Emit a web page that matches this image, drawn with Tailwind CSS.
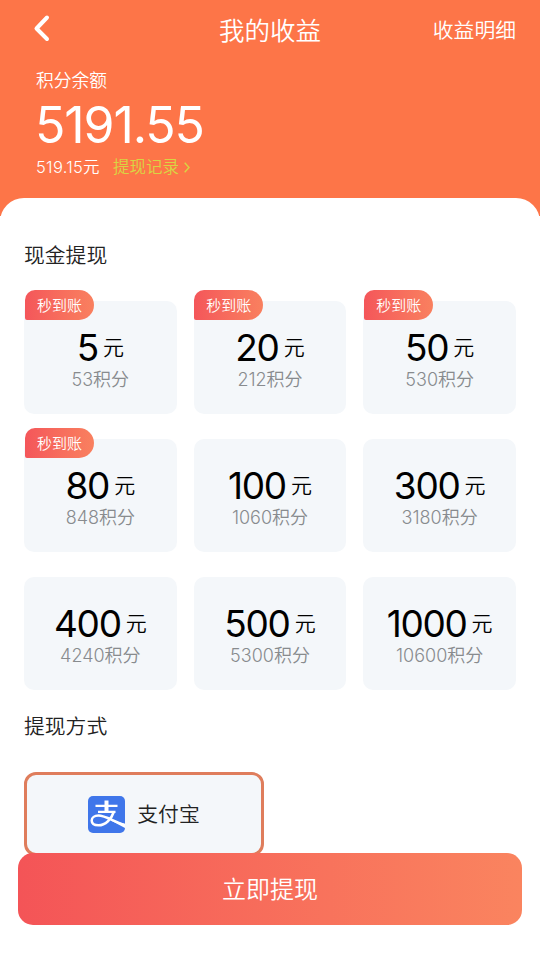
<!DOCTYPE html>
<html lang="zh-CN">
<head>
<meta charset="utf-8">
<title>我的收益</title>
<script src="https://cdn.jsdelivr.net/npm/@tailwindcss/browser@4"></script>
</head>
<body class="bg-white">
<div class="relative w-[540px] h-[956px] overflow-hidden bg-white font-['Inter','Noto_Sans_CJK_SC',sans-serif] font-[350] text-[#222]">
  <header class="h-[216px] bg-[#fd7548] text-white">
    <nav class="grid grid-cols-3 items-center h-[60px] pl-[33px] pr-6">
      <svg class="w-[18px] h-[28px] -mt-1" viewBox="0 0 18 28" fill="none" stroke="#fff" stroke-width="4" stroke-linecap="round" stroke-linejoin="round"><path d="M14 3.5 3.5 14.5 14 25"/></svg>
      <h1 class="pt-px text-[25.5px] leading-[36px] text-center whitespace-nowrap -ml-[9px]">我的收益</h1>
      <a class="pt-0.5 text-[20.8px] leading-[30px] text-right whitespace-nowrap">收益明细</a>
    </nav>
    <div class="pl-9">
      <div class="mt-[9px] text-[17.8px] leading-6">积分余额</div>
      <div class="mt-1 -ml-px text-[50px] leading-[56px] tracking-[-1.1px] font-normal">5191.55</div>
      <div class="mt-[2px] flex items-center text-[16.5px] leading-6">
        <span class="text-[16.5px] tracking-[0.3px]">519.15元</span>
        <a class="ml-[13px] flex items-center text-[#d9d443]">提现记录<svg class="ml-[5px] w-[6px] h-[11px]" viewBox="0 0 6 11" fill="none" stroke="currentColor" stroke-width="1.4"><path d="M.7 .8 5 5.5 .7 10.2"/></svg></a>
      </div>
    </div>
  </header>
  <main class="relative -mt-[18px] rounded-t-[24px] bg-white px-6 pt-[43px]">
    <h2 class="text-[20.8px] leading-[30px]">现金提现</h2>
    <div class="mt-[30px] grid grid-cols-3 gap-x-[17px] gap-y-[25px] text-center">
      <div class="relative h-[113px] rounded-[10px] bg-[#f4f7fa] pt-[27px]">
        <span class="absolute -top-[11px] left-px w-[69px] h-[30px] rounded-tl-[10px] rounded-r-[15px] rounded-bl-[2px] bg-linear-to-r from-[#f4565a] to-[#f9805f] text-white text-[15px] leading-[31px]">秒到账</span>
        <div class="flex items-center justify-center gap-[5px] h-10 text-black"><span class="text-[37px] leading-10 tracking-[-1.3px] font-normal">5</span><span class="text-[21px] leading-10">元</span></div>
        <div class="text-[18px] leading-[23px] text-[#888b8e]">53积分</div>
      </div>
      <div class="relative h-[113px] rounded-[10px] bg-[#f4f7fa] pt-[27px]">
        <span class="absolute -top-[11px] left-[0.5px] w-[69px] h-[30px] rounded-tl-[10px] rounded-r-[15px] rounded-bl-[2px] bg-linear-to-r from-[#f4565a] to-[#f9805f] text-white text-[15px] leading-[31px]">秒到账</span>
        <div class="flex items-center justify-center gap-[5px] h-10 text-black"><span class="text-[37px] leading-10 tracking-[-1.3px] font-normal">20</span><span class="text-[21px] leading-10">元</span></div>
        <div class="text-[18px] leading-[23px] text-[#888b8e]">212积分</div>
      </div>
      <div class="relative h-[113px] rounded-[10px] bg-[#f4f7fa] pt-[27px]">
        <span class="absolute -top-[11px] left-px w-[69px] h-[30px] rounded-tl-[10px] rounded-r-[15px] rounded-bl-[2px] bg-linear-to-r from-[#f4565a] to-[#f9805f] text-white text-[15px] leading-[31px]">秒到账</span>
        <div class="flex items-center justify-center gap-[5px] h-10 text-black"><span class="text-[37px] leading-10 tracking-[-1.3px] font-normal">50</span><span class="text-[21px] leading-10">元</span></div>
        <div class="text-[18px] leading-[23px] text-[#888b8e]">530积分</div>
      </div>
      <div class="relative h-[113px] rounded-[10px] bg-[#f4f7fa] pt-[27px]">
        <span class="absolute -top-[11px] left-px w-[69px] h-[30px] rounded-tl-[10px] rounded-r-[15px] rounded-bl-[2px] bg-linear-to-r from-[#f4565a] to-[#f9805f] text-white text-[15px] leading-[31px]">秒到账</span>
        <div class="flex items-center justify-center gap-[5px] h-10 text-black"><span class="text-[37px] leading-10 tracking-[-1.3px] font-normal">80</span><span class="text-[21px] leading-10">元</span></div>
        <div class="text-[18px] leading-[23px] text-[#888b8e]">848积分</div>
      </div>
      <div class="h-[113px] rounded-[10px] bg-[#f4f7fa] pt-[27px]">
        <div class="flex items-center justify-center gap-[5px] h-10 text-black"><span class="text-[37px] leading-10 tracking-[-1.3px] font-normal">100</span><span class="text-[21px] leading-10">元</span></div>
        <div class="text-[18px] leading-[23px] text-[#888b8e]">1060积分</div>
      </div>
      <div class="h-[113px] rounded-[10px] bg-[#f4f7fa] pt-[27px]">
        <div class="flex items-center justify-center gap-[5px] h-10 text-black"><span class="text-[37px] leading-10 tracking-[-1.3px] font-normal">300</span><span class="text-[21px] leading-10">元</span></div>
        <div class="text-[18px] leading-[23px] text-[#888b8e]">3180积分</div>
      </div>
      <div class="h-[113px] rounded-[10px] bg-[#f4f7fa] pt-[27px]">
        <div class="flex items-center justify-center gap-[5px] h-10 text-black"><span class="text-[37px] leading-10 tracking-[-1.3px] font-normal">400</span><span class="text-[21px] leading-10">元</span></div>
        <div class="text-[18px] leading-[23px] text-[#888b8e]">4240积分</div>
      </div>
      <div class="h-[113px] rounded-[10px] bg-[#f4f7fa] pt-[27px]">
        <div class="flex items-center justify-center gap-[5px] h-10 text-black"><span class="text-[37px] leading-10 tracking-[-1.3px] font-normal">500</span><span class="text-[21px] leading-10">元</span></div>
        <div class="text-[18px] leading-[23px] text-[#888b8e]">5300积分</div>
      </div>
      <div class="h-[113px] rounded-[10px] bg-[#f4f7fa] pt-[27px]">
        <div class="flex items-center justify-center gap-[5px] h-10 text-black"><span class="text-[37px] leading-10 tracking-[-1.3px] font-normal">1000</span><span class="text-[21px] leading-10">元</span></div>
        <div class="text-[18px] leading-[23px] text-[#888b8e]">10600积分</div>
      </div>
    </div>
    <h2 class="mt-[22px] text-[20.8px] leading-[30px]">提现方式</h2>
    <div class="mt-[30px] flex w-[240px] h-[84px] items-center justify-center gap-3 rounded-[12px] border-3 border-[#df7d5c] bg-[#f4f7fa]">
      <svg class="w-[37px] h-[37px]" viewBox="0 0 37 37" fill="none"><rect width="37" height="37" rx="5" fill="#3f76ea"/><g stroke="#fff"><path d="M18.500 4.500v11" stroke-width="4"/><path d="M7.500 9.800h22M10 15.800h17.500" stroke-width="2.200"/><path d="M26 15.500C23.500 23 17.500 29.300 10.500 29.300c-4.500 0-6.800-2-6.800-4.800 0-3 2.900-4.900 6.700-4.900 6.500 0 13.500 4.900 26.600 9.700" stroke-width="2.500"/><path d="M22.500 24.300 37 27.700v4.300z" fill="#fff" stroke="none"/></g></svg>
      <span class="pt-px text-[20.8px] leading-[30px]">支付宝</span>
    </div>
  </main>
  <button class="absolute left-[18px] top-[853px] w-[504px] h-[72px] rounded-[15px] bg-linear-to-r from-[#f45457] to-[#fa845f] pt-0.5 text-center text-[24px] leading-[70px] text-white">立即提现</button>
</div>
</body>
</html>
